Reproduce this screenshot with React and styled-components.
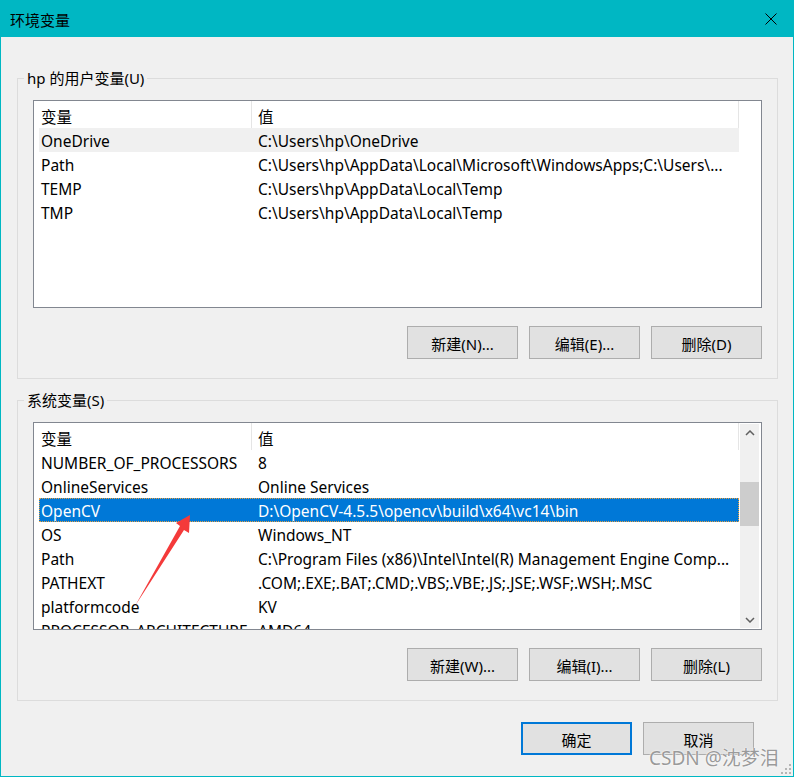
import React from "react";
import styled, { createGlobalStyle } from "styled-components";

const GlobalStyle = createGlobalStyle`
  html, body {
    margin: 0;
    padding: 0;
    background: #f0f0f0;
  }
  body {
    font-family: "Noto Sans", "Noto Sans CJK SC", sans-serif;
  }
`;

const Window = styled.div`
  position: relative;
  width: 794px;
  height: 777px;
  box-sizing: border-box;
  background: #f0f0f0;
  border: 1px solid #00b7c3;
  border-top: none;
  font-size: 15.5px;
  color: #000;
  overflow: hidden;
  display: flex;
  flex-direction: column;
`;

const TitleBar = styled.div`
  height: 37px;
  flex-shrink: 0;
  background: #00b7c3;
  display: flex;
  align-items: center;
  justify-content: space-between;
  padding-left: 9px;
`;

const Title = styled.span`
  font-size: 15px;
  line-height: 20px;
  padding-top: 2px;
  color: #000;
`;

const CloseButton = styled.div`
  width: 44px;
  height: 37px;
  display: flex;
  align-items: center;
  justify-content: center;
`;

const Body = styled.div`
  padding: 31px 15px 0 16px;
  display: flex;
  flex-direction: column;
`;

const Group = styled.fieldset`
  margin: 0;
  padding: 0;
  border: 1px solid #dcdcdc;
  min-width: 0;

  & + & {
    margin-top: 11px;
  }
`;

const Legend = styled.legend`
  margin-left: 6px;
  padding: 0 3px;
  font-size: 15px;
  line-height: 20px;
`;

const GroupBody = styled.div`
  padding: 12px 15px 19px;
`;

const ListBox = styled.div`
  display: flex;
  height: 208px;
  box-sizing: border-box;
  border: 1px solid #828790;
  background: #fff;
`;

const ListContent = styled.div`
  width: 705px;
  flex-shrink: 0;
  overflow: hidden;
`;

const Header = styled.div`
  display: grid;
  grid-template-columns: 218px 1fr;
  height: 27px;
  border-right: 1px solid #e5e5e5;
`;

const HeaderCell = styled.div`
  display: flex;
  align-items: center;
  padding-top: 3px;
  padding-left: ${(p) => p.$pad}px;
  border-right: ${(p) => (p.$divider ? "1px solid #e5e5e5" : "none")};
`;

const Rows = styled.div`
  padding-left: 5px;
`;

const Row = styled.div`
  display: grid;
  grid-template-columns: 212px 1fr;
  height: 24px;
  padding-top: 2px;
  align-items: center;
  box-sizing: border-box;
  background: ${(p) => (p.$selected ? "#0078d7" : p.$hover ? "#f0f0f0" : "transparent")};
  color: ${(p) => (p.$selected ? "#fff" : "#000")};
  outline: ${(p) => (p.$selected ? "1px dotted #e8a040" : "none")};
  outline-offset: -1px;
`;

const Cell = styled.div`
  padding-left: ${(p) => p.$pad}px;
  white-space: nowrap;
  overflow: hidden;
  line-height: 20px;
`;

const Side = styled.div`
  flex: 1;
  display: flex;
  padding: 1px 2px 1px 1px;
`;

const ScrollBar = styled.div`
  flex: 1;
  background: #f0f0f0;
  display: flex;
  flex-direction: column;
`;

const ScrollArrow = styled.div`
  height: 17px;
  display: flex;
  align-items: center;
  justify-content: center;
`;

const ScrollTrack = styled.div`
  flex: 1;
  padding-top: ${(p) => p.$offset}px;
`;

const Thumb = styled.div`
  height: ${(p) => p.$size}px;
  background: #cdcdcd;
`;

const ButtonRow = styled.div`
  display: flex;
  justify-content: flex-end;
  gap: 11px;
  margin-top: 18px;
  padding-right: ${(p) => p.$inset || 0}px;
`;

const Button = styled.button`
  width: 111px;
  height: 33px;
  box-sizing: border-box;
  padding: 1px 0 0;
  background: #e1e1e1;
  border: ${(p) => (p.$primary ? "2px solid #0078d7" : "1px solid #adadad")};
  font-family: inherit;
  font-size: 15px;
  color: #000;
`;

const Footer = styled(ButtonRow)`
  margin-top: 21px;
`;

const Watermark = styled.div`
  position: absolute;
  left: 648px;
  top: 746px;
  font-size: 19px;
  line-height: 24px;
  color: #9a9a9a;
  text-shadow: 0 0 2px #fff, 0 0 1px #fff;
  white-space: nowrap;
`;

const Grip = styled.svg`
  position: absolute;
  right: 2px;
  bottom: 2px;
`;

const Pointer = styled.svg`
  position: absolute;
  left: 130px;
  top: 510px;
`;

const userVars = [
  ["OneDrive", "C:\\Users\\hp\\OneDrive"],
  ["Path", "C:\\Users\\hp\\AppData\\Local\\Microsoft\\WindowsApps;C:\\Users\\..."],
  ["TEMP", "C:\\Users\\hp\\AppData\\Local\\Temp"],
  ["TMP", "C:\\Users\\hp\\AppData\\Local\\Temp"],
];

const systemVars = [
  ["NUMBER_OF_PROCESSORS", "8"],
  ["OnlineServices", "Online Services"],
  ["OpenCV", "D:\\OpenCV-4.5.5\\opencv\\build\\x64\\vc14\\bin"],
  ["OS", "Windows_NT"],
  ["Path", "C:\\Program Files (x86)\\Intel\\Intel(R) Management Engine Comp..."],
  ["PATHEXT", ".COM;.EXE;.BAT;.CMD;.VBS;.VBE;.JS;.JSE;.WSF;.WSH;.MSC"],
  ["platformcode", "KV"],
  ["PROCESSOR_ARCHITECTURE", "AMD64"],
];

const Chevron = ({ up }) => (
  <svg width="10" height="6" viewBox="0 0 10 6">
    <polyline
      points={up ? "1,5 5,1 9,5" : "1,1 5,5 9,1"}
      fill="none"
      stroke="#606060"
      strokeWidth="1.5"
    />
  </svg>
);

const VarList = ({ items, hover, selected, scroll }) => (
  <ListBox>
    <ListContent>
      <Header>
        <HeaderCell $pad={7} $divider>变量</HeaderCell>
        <HeaderCell $pad={6}>值</HeaderCell>
      </Header>
      <Rows>
        {items.map(([name, value], i) => (
          <Row key={name + i} $hover={i === hover} $selected={i === selected}>
            <Cell $pad={2}>{name}</Cell>
            <Cell $pad={7}>{value}</Cell>
          </Row>
        ))}
      </Rows>
    </ListContent>
    <Side>
      {scroll && (
        <ScrollBar>
          <ScrollArrow>
            <Chevron up />
          </ScrollArrow>
          <ScrollTrack $offset={41}>
            <Thumb $size={44} />
          </ScrollTrack>
          <ScrollArrow>
            <Chevron />
          </ScrollArrow>
        </ScrollBar>
      )}
    </Side>
  </ListBox>
);

const App = () => (
  <Window>
    <GlobalStyle />
    <TitleBar>
      <Title>环境变量</Title>
      <CloseButton>
        <svg width="12" height="12" viewBox="0 0 12 12">
          <path d="M0.5 0.5 L11.5 11.5 M11.5 0.5 L0.5 11.5" stroke="#000" strokeWidth="1" />
        </svg>
      </CloseButton>
    </TitleBar>

    <Body>
      <Group>
        <Legend>hp 的用户变量(U)</Legend>
        <GroupBody>
          <VarList items={userVars} hover={0} />
          <ButtonRow>
            <Button>新建(N)...</Button>
            <Button>编辑(E)...</Button>
            <Button>删除(D)</Button>
          </ButtonRow>
        </GroupBody>
      </Group>

      <Group>
        <Legend>系统变量(S)</Legend>
        <GroupBody>
          <VarList items={systemVars} selected={2} scroll />
          <ButtonRow>
            <Button>新建(W)...</Button>
            <Button>编辑(I)...</Button>
            <Button>删除(L)</Button>
          </ButtonRow>
        </GroupBody>
      </Group>

      <Footer $inset={24}>
        <Button $primary>确定</Button>
        <Button>取消</Button>
      </Footer>
    </Body>

    <Pointer width="66" height="100" viewBox="0 0 66 100">
      <polygon points="59,5 45,13 49,16 4,96 53,20 58,23" fill="#f43a3a" />
    </Pointer>

    <Watermark>CSDN @沈梦泪</Watermark>

    <Grip width="10" height="10" viewBox="0 0 10 10">
      <g fill="#b5b5b5">
        <rect x="8" y="0" width="2" height="2" />
        <rect x="4" y="4" width="2" height="2" />
        <rect x="8" y="4" width="2" height="2" />
        <rect x="0" y="8" width="2" height="2" />
        <rect x="4" y="8" width="2" height="2" />
        <rect x="8" y="8" width="2" height="2" />
      </g>
    </Grip>
  </Window>
);

export default App;
